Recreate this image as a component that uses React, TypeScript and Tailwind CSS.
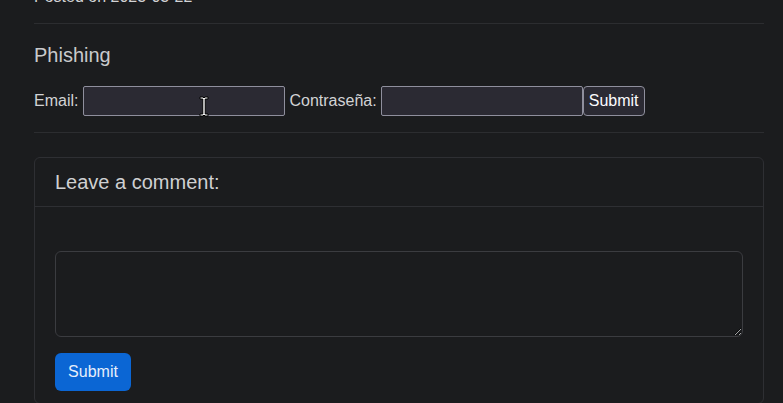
export default function App() {
  return (
    <div
      className="min-h-screen overflow-hidden bg-[#1b1c1e] pl-[34px] pr-[19px] text-[#d2d3d5]"
      style={{ fontFamily: '"Liberation Sans", Arial, sans-serif' }}
    >
      <div className="-mt-[15px] text-[16px] leading-[24px]">Posted on 2023-03-22</div>
      <hr className="mt-[14px] border-0 border-t border-[#2c2d30]" />

      <h5 className="mt-[19px] text-[20px] leading-[24px] text-[#c9cacc]">Phishing</h5>

      <form className="mt-[19px] flex h-[30px] items-center text-[16px] leading-[24px]">
        <label className="mr-[5px]">Email:</label>
        <div className="relative">
          <input
            type="text"
            className="h-[30px] w-[202px] rounded-[2px] border border-[#8f8f9d] bg-[#2b2a33] px-1 text-white outline-none"
          />
          {/* mouse cursor */}
          <svg
            className="pointer-events-none absolute left-[116px] top-[10px]"
            width="10"
            height="21"
            viewBox="0 0 10 21"
          >
            <path
              d="M1 1h3l1 1 1-1h3v2H6.2v15H9v2H6l-1-1-1 1H1v-2h2.8V3H1z"
              fill="#fff"
              stroke="#000"
              strokeWidth="1"
            />
          </svg>
        </div>
        <label className="ml-[4px] mr-[4px]">Contraseña:</label>
        <input
          type="password"
          className="h-[30px] w-[202px] rounded-[2px] border border-[#8f8f9d] bg-[#2b2a33] px-1 text-white outline-none"
        />
        <button
          type="button"
          className="h-[30px] w-[62px] rounded-[4px] border border-[#8f8f9d] bg-[#2b2a33] text-[16px] text-[#fbfbfe]"
        >
          Submit
        </button>
      </form>

      <hr className="mt-[16px] border-0 border-t border-[#2c2d30]" />

      <div className="mt-[24px] rounded-[6px] border border-[#2e2f33]">
        <div className="border-b border-[#2e2f33] px-[20px] pt-[12px] pb-[12px]">
          <h5 className="text-[20px] leading-[24px] text-[#cfd0d2]">Leave a comment:</h5>
        </div>
        <div className="px-[20px] pt-[44px] pb-[12px]">
          <textarea
            rows={3}
            className="block h-[86px] w-full rounded-[6px] border border-[#3b3c40] bg-[#1b1c1e] px-3 py-1.5 text-[16px] text-[#dee2e6] outline-none"
          />
          <button
            type="button"
            className="mt-[16px] h-[38px] w-[76px] rounded-[6px] bg-[#0b66d4] text-[16px] leading-[24px] text-[#e6eefb]"
          >
            Submit
          </button>
        </div>
      </div>
    </div>
  );
}
